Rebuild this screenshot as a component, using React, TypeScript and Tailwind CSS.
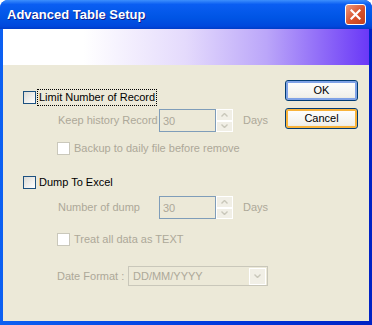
import type { ReactNode } from "react";

const font = { fontFamily: '"Liberation Sans", Arial, sans-serif' };

const Checkbox = ({ disabled }: { disabled?: boolean }) =>
  disabled ? (
    <span className="block w-[13px] h-[13px] shrink-0 border border-[#cac8bb] bg-white" />
  ) : (
    <span className="block w-[13px] h-[13px] shrink-0 border border-[#1c5180] bg-[linear-gradient(135deg,#dcdbd5,#ffffff)]" />
  );

const Chevron = ({ up }: { up?: boolean }) => (
  <svg width="7" height="4" viewBox="0 0 7 4" className="block">
    <path
      d={up ? "M0.5 3.5 L3.5 0.5 L6.5 3.5" : "M0.5 0.5 L3.5 3.5 L6.5 0.5"}
      fill="none"
      stroke="#c9c7ba"
      strokeWidth="1.4"
    />
  </svg>
);

const Spinner = () => (
  <div className="flex flex-col w-[17px] h-[23px] gap-0">
    <div className="flex-1 flex items-center justify-center border border-white bg-[#f1efe6]">
      <Chevron up />
    </div>
    <div className="flex-1 flex items-center justify-center border border-white bg-[#f1efe6]">
      <Chevron />
    </div>
  </div>
);

const NumberField = ({ label }: { label: string }) => (
  <div className="flex items-center h-[23px] pl-[35px]">
    <span className="w-[101px] text-[#aca899]">{label}</span>
    <div className="w-[57px] h-[23px] border border-[#7f9db9] bg-[#ece9d8] pl-[3px] pt-[3px] text-[#aca899]">
      30
    </div>
    <Spinner />
    <span className="ml-[10px] text-[#aca899]">Days</span>
  </div>
);

const SubCheck = ({ children }: { children: ReactNode }) => (
  <div className="flex items-center h-[13px] pl-[34px] gap-[4px] text-[#aca899]">
    <Checkbox disabled />
    <span>{children}</span>
  </div>
);

const XpButton = ({ text, focus }: { text: string; focus?: boolean }) => (
  <button
    className={
      focus
        ? "w-[73px] h-[21px] rounded-[3px] border border-[#003c74] bg-[linear-gradient(to_bottom,#fff,#f0f0ea_85%,#d6d0c5)] shadow-[inset_0_0_0_2px_#f8b33a] text-black"
        : "w-[73px] h-[21px] rounded-[3px] border border-[#003c74] bg-[linear-gradient(to_bottom,#fff,#f0f0ea_85%,#d6d0c5)] shadow-[inset_0_0_0_2px_#7fa2e6] text-black"
    }
  >
    {text}
  </button>
);

export default function App() {
  return (
    <div
      className="w-[372px] h-[325px] flex flex-col rounded-t-[8px] bg-[linear-gradient(to_right,#0c60f2,#0038dc_60%,#0022c4)] text-[11px]"
      style={font}
    >
      {/* Title bar */}
      <div className="h-[29px] shrink-0 flex items-center justify-between pl-[7px] pr-[6px] rounded-t-[8px] bg-[linear-gradient(to_bottom,#3d8ffd,#0a5ef2_15%,#0055e5_60%,#0048dd_90%,#003cc8)]">
        <span className="text-white font-bold text-[13px] [text-shadow:1px_1px_0_#0f1c8c]">
          Advanced Table Setup
        </span>
        <div className="w-[21px] h-[21px] rounded-[3px] border border-white bg-[linear-gradient(135deg,#ec9a7e,#d8512b_55%,#c2401c)] flex items-center justify-center">
          <svg width="11" height="11" viewBox="0 0 11 11">
            <path d="M1.5 1.5 L9.5 9.5 M9.5 1.5 L1.5 9.5" stroke="#fff" strokeWidth="2.2" strokeLinecap="square" />
          </svg>
        </div>
      </div>

      <div className="flex-1 flex flex-col mx-[3px] mb-[4px]">
        {/* Banner */}
        <div className="h-[36px] shrink-0 bg-[linear-gradient(to_right,#fff_22%,#e4dafc_50%,#bba6f9_72%,#6a38f7)]" />

        {/* Body */}
        <div className="flex-1 flex bg-[#ece9d8] text-black">
          <div className="flex-1 flex flex-col pt-[24px] pl-[20px]">
            <div className="flex items-center h-[17px]">
              <Checkbox />
              <span className="ml-[1px] px-[1px] h-[17px] flex items-center border border-dotted border-black">
                Limit Number of Record
              </span>
            </div>
            <div className="mt-[3px]">
              <NumberField label="Keep history Record" />
            </div>
            <div className="mt-[10px]">
              <SubCheck>Backup to daily file before remove</SubCheck>
            </div>

            <div className="mt-[21px] flex items-center h-[13px] gap-[3px]">
              <Checkbox />
              <span>Dump To Excel</span>
            </div>
            <div className="mt-[7px]">
              <NumberField label="Number of dump" />
            </div>
            <div className="mt-[14px]">
              <SubCheck>Treat all data as TEXT</SubCheck>
            </div>
            <div className="mt-[20px] flex items-center h-[20px] pl-[34px]">
              <span className="w-[71px] text-[#aca899]">Date Format :</span>
              <div className="w-[140px] h-[20px] border border-[#c9c7ba] flex items-center justify-between pl-[4px] pr-[1px]">
                <span className="text-[#aca899]">DD/MM/YYYY</span>
                <div className="w-[17px] h-[17px] border border-white bg-[#f1efe6] flex items-center justify-center">
                  <Chevron />
                </div>
              </div>
            </div>
          </div>

          <div className="flex flex-col gap-[7px] pt-[15px] pr-[11px]">
            <XpButton text="OK" />
            <XpButton text="Cancel" focus />
          </div>
        </div>
      </div>
    </div>
  );
}
